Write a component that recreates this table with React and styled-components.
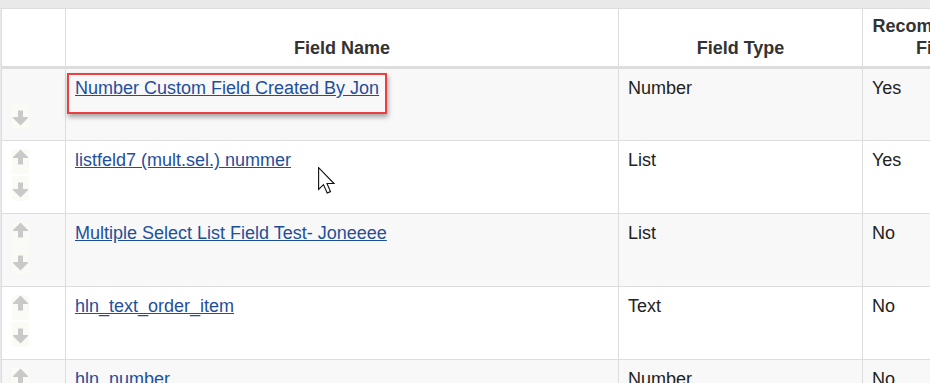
import React from 'react';
import styled, { createGlobalStyle } from 'styled-components';

const GlobalStyle = createGlobalStyle`
  html, body {
    margin: 0;
    padding: 0;
    overflow: hidden;
    background: #e9e9e9;
    font-family: "Liberation Sans", Arial, sans-serif;
  }
`;

const fields = [
  { name: 'Number Custom Field Created By Jon', type: 'Number', rec: 'Yes', highlight: true },
  { name: 'listfeld7 (mult.sel.) nummer', type: 'List', rec: 'Yes' },
  { name: 'Multiple Select List Field Test- Joneeee', type: 'List', rec: 'No' },
  { name: 'hln_text_order_item', type: 'Text', rec: 'No' },
  { name: 'hln_number', type: 'Number', rec: 'No' },
];

const Page = styled.div`
  position: relative;
  width: 930px;
  height: 383px;
  overflow: hidden;
  padding: 8px 0 0 1px;
  box-sizing: border-box;
`;

const Table = styled.table`
  border-collapse: collapse;
  table-layout: fixed;
  width: 1010px;
  background: #fff;
  color: #222;
  font-size: 18px;
  line-height: 22px;
`;

const Th = styled.th`
  width: ${p => p.$w}px;
  height: 59px;
  padding: 0 9px 7px;
  border: 1px solid #ddd;
  border-bottom: 3px solid #ddd;
  vertical-align: bottom;
  text-align: center;
  font-weight: bold;
  color: #333;
  box-sizing: border-box;
`;

const Row = styled.tr`
  background: ${p => (p.$odd ? '#f8f8f8' : '#fff')};
`;

const Td = styled.td`
  position: relative;
  height: 73px;
  padding: 8px 9px 0;
  border: 1px solid #ddd;
  vertical-align: top;
  box-sizing: border-box;
`;

const SortCell = styled(Td)`
  padding: 0;
`;

const SortStack = styled.div`
  display: flex;
  flex-direction: column;
  gap: 2px;
  padding: 8px 0 0 10px;
`;

const SortButton = styled.span`
  display: flex;
  align-items: ${p => (p.$dir === 'up' ? 'flex-start' : 'flex-end')};
  justify-content: center;
  width: 17px;
  height: 25px;
  padding: ${p => (p.$dir === 'up' ? '0 0 8px' : '8px 0 3px')};
  box-sizing: border-box;
  background: #fbfbf6;
  border-radius: 3px;
  visibility: ${p => (p.$hidden ? 'hidden' : 'visible')};
`;

const FieldLink = styled.a`
  color: #1f4f9b;
  text-decoration: underline;
  cursor: pointer;
`;

const Highlight = styled.div`
  position: absolute;
  left: 1px;
  top: 4px;
  width: 320px;
  height: 41px;
  border: 2px solid #ec4040;
  box-sizing: border-box;
  box-shadow: 1px 3px 5px rgba(0, 0, 0, 0.35);
  pointer-events: none;
`;

const Cursor = styled.svg`
  position: absolute;
  left: 317px;
  top: 167px;
`;

const Arrow = ({ dir }) => (
  <svg width="17" height="16" viewBox="0 0 17 16">
    <path
      d="M8.5 0.5 L16 8 L16 9 L11 9 L11 15.5 L6 15.5 L6 9 L1 9 L1 8 Z"
      fill="#c9c9c9"
      transform={dir === 'down' ? 'rotate(180 8.5 8)' : undefined}
    />
  </svg>
);

export default function App() {
  return (
    <>
      <GlobalStyle />
      <Page>
        <Table>
          <thead>
            <tr>
              <Th $w={64} />
              <Th $w={553}>Field Name</Th>
              <Th $w={244}>Field Type</Th>
              <Th $w={149}>Recommended Field</Th>
            </tr>
          </thead>
          <tbody>
            {fields.map((f, i) => (
              <Row key={f.name} $odd={i % 2 === 0}>
                <SortCell>
                  <SortStack>
                    <SortButton $dir="up" $hidden={i === 0}>
                      <Arrow dir="up" />
                    </SortButton>
                    <SortButton $dir="down">
                      <Arrow dir="down" />
                    </SortButton>
                  </SortStack>
                </SortCell>
                <Td>
                  <FieldLink>{f.name}</FieldLink>
                  {f.highlight && <Highlight />}
                </Td>
                <Td>{f.type}</Td>
                <Td>{f.rec}</Td>
              </Row>
            ))}
          </tbody>
        </Table>
        <Cursor width="20" height="28" viewBox="0 0 13 20">
          <path
            d="M0.5 0.5 L0.5 16 L4 12.6 L6.6 18.6 L9 17.6 L6.5 11.8 L11.5 11.8 Z"
            fill="#fff"
            stroke="#111"
            strokeWidth="0.8"
            strokeLinejoin="miter"
          />
        </Cursor>
      </Page>
    </>
  );
}
